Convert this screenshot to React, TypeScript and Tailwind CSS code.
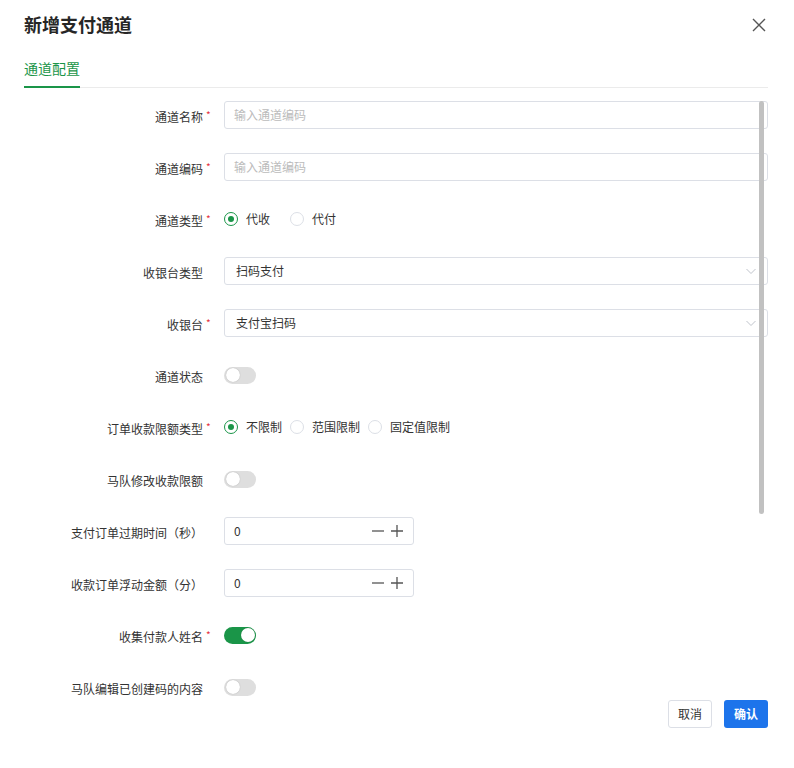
import type { ReactNode } from 'react';

const font = { fontFamily: '"Noto Sans CJK SC", "Noto Sans", sans-serif' };

function Label({ text, required }: { text: string; required?: boolean }) {
    return (
        <div className="w-[179px] shrink-0 text-right mr-[21px]">
            <span className="relative text-[12px] text-[#333]">
                {text}
                {required && <span className="absolute left-full top-[-1px] ml-[3px] text-[10px] text-[#e5323e]">*</span>}
            </span>
        </div>
    );
}

function Row({ label, required, children }: { label: string; required?: boolean; children: ReactNode }) {
    return (
        <div className="h-[52px] flex items-center">
            <Label text={label} required={required} />
            <div className="flex-1 flex items-center">{children}</div>
        </div>
    );
}

function Radio({ label, checked, className }: { label: string; checked?: boolean; className?: string }) {
    return (
        <div className={`flex items-center mr-2 ${className ?? ''}`}>
            <span className={`w-[14px] h-[14px] rounded-full border flex items-center justify-center ${checked ? 'border-[#1a9548]' : 'border-[#dcdfe6]'}`}>
                {checked && <span className="w-[6px] h-[6px] rounded-full bg-[#1a9548]" />}
            </span>
            <span className="ml-2 text-[12px] text-[#333]">{label}</span>
        </div>
    );
}

function Toggle({ on }: { on?: boolean }) {
    return (
        <div className={`w-[32px] h-[17px] rounded-full p-[1.5px] flex ${on ? 'bg-[#1a9548] justify-end' : 'bg-[#dedede] justify-start'}`}>
            <span className="w-[14px] h-[14px] rounded-full bg-white shadow-[0_0_1px_rgba(0,0,0,0.3)]" />
        </div>
    );
}

function Chevron() {
    return (
        <svg className="w-[12px] h-[12px] text-[#c0c4cc]" viewBox="0 0 12 12" fill="none" stroke="currentColor" strokeWidth={1}>
            <path d="M1.5 4l4.5 4.5L10.5 4" />
        </svg>
    );
}

function NumberInput() {
    return (
        <div className="w-[190px] h-[28px] border border-[#dcdfe6] rounded-[3px] flex items-center pl-[9px] pr-[10px]">
            <span className="flex-1 text-[12px] text-[#333]">0</span>
            <svg className="w-[12px] h-[12px] text-[#555]" viewBox="0 0 12 12" fill="none" stroke="currentColor" strokeWidth={1.3}>
                <path d="M0 6h12" />
            </svg>
            <svg className="w-[12px] h-[12px] ml-[7px] text-[#555]" viewBox="0 0 12 12" fill="none" stroke="currentColor" strokeWidth={1.3}>
                <path d="M0 6h12M6 0v12" />
            </svg>
        </div>
    );
}

export default function App() {
    return (
        <div className="w-[794px] h-[768px] bg-white pl-6 pr-[26px] flex flex-col" style={font}>
            <div className="h-[50px] flex items-center justify-between">
                <h2 className="text-[18px] font-bold text-[#262626] -mt-[2px]">新增支付通道</h2>
                <svg className="w-[14px] h-[14px] mr-[2px] text-[#555]" viewBox="0 0 14 14" fill="none" stroke="currentColor" strokeWidth={1.4}>
                    <path d="M1 1l12 12M13 1L1 13" />
                </svg>
            </div>

            <div className="flex border-b border-[#ebebeb]">
                <div className="pt-[8px] pb-[8px] border-b-2 border-[#1a9548] -mb-px text-[14px] leading-[20px] text-[#1a9548]">通道配置</div>
            </div>

            <div className="relative h-[608px] pt-px overflow-hidden">
                <Row label="通道名称" required>
                    <div className="w-full h-[28px] border border-[#dcdfe6] rounded-[3px] px-[9px] flex items-center text-[12px] text-[#bbb]">输入通道编码</div>
                </Row>
                <Row label="通道编码" required>
                    <div className="w-full h-[28px] border border-[#dcdfe6] rounded-[3px] px-[9px] flex items-center text-[12px] text-[#bbb]">输入通道编码</div>
                </Row>
                <Row label="通道类型" required>
                    <Radio label="代收" checked className="w-[58px]" />
                    <Radio label="代付" />
                </Row>
                <Row label="收银台类型">
                    <div className="w-full h-[28px] border border-[#dcdfe6] rounded-[3px] pl-[11px] pr-[10px] flex items-center justify-between text-[12px] text-[#333]">
                        <span>扫码支付</span>
                        <Chevron />
                    </div>
                </Row>
                <Row label="收银台" required>
                    <div className="w-full h-[28px] border border-[#dcdfe6] rounded-[3px] pl-[11px] pr-[10px] flex items-center justify-between text-[12px] text-[#333]">
                        <span>支付宝扫码</span>
                        <Chevron />
                    </div>
                </Row>
                <Row label="通道状态">
                    <Toggle />
                </Row>
                <Row label="订单收款限额类型" required>
                    <Radio label="不限制" checked />
                    <Radio label="范围限制" />
                    <Radio label="固定值限制" />
                </Row>
                <Row label="马队修改收款限额">
                    <Toggle />
                </Row>
                <Row label="支付订单过期时间（秒）">
                    <NumberInput />
                </Row>
                <Row label="收款订单浮动金额（分）">
                    <NumberInput />
                </Row>
                <Row label="收集付款人姓名" required>
                    <Toggle on />
                </Row>
                <Row label="马队编辑已创建码的内容">
                    <Toggle />
                </Row>

                <div className="absolute right-[4px] top-[13px] w-[5px] h-[413px] rounded-full bg-[#c1c1c1]" />
            </div>

            <div className="flex justify-end gap-3 pt-[4px]">
                <button className="w-[44px] h-[28px] border border-[#dcdfe6] rounded-[3px] bg-white text-[12px] text-[#333]">取消</button>
                <button className="w-[44px] h-[28px] rounded-[3px] bg-[#1d74eb] text-[12px] font-semibold text-white">确认</button>
            </div>
        </div>
    );
}
